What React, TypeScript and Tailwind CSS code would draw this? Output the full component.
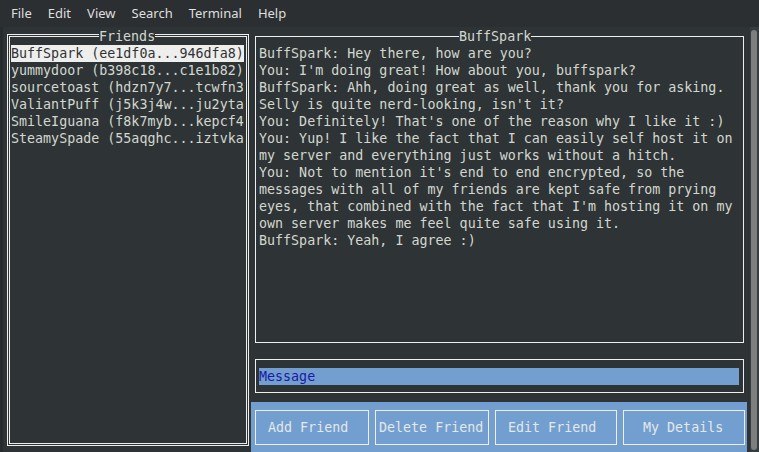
import React from 'react';

const friends = [
  'BuffSpark (ee1df0a...946dfa8)',
  'yummydoor (b398c18...c1e1b82)',
  'sourcetoast (hdzn7y7...tcwfn3',
  'ValiantPuff (j5k3j4w...ju2yta',
  'SmileIguana (f8k7myb...kepcf4',
  'SteamySpade (55aqghc...iztvka',
];

const messages = [
  'BuffSpark: Hey there, how are you?',
  "You: I'm doing great! How about you, buffspark?",
  'BuffSpark: Ahh, doing great as well, thank you for asking.',
  "Selly is quite nerd-looking, isn't it?",
  "You: Definitely! That's one of the reason why I like it :)",
  'You: Yup! I like the fact that I can easily self host it on',
  'my server and everything just works without a hitch.',
  "You: Not to mention it's end to end encrypted, so the",
  'messages with all of my friends are kept safe from prying',
  "eyes, that combined with the fact that I'm hosting it on my",
  'own server makes me feel quite safe using it.',
  'BuffSpark: Yeah, I agree :)',
];

const menu = ['File', 'Edit', 'View', 'Search', 'Terminal', 'Help'];

// buttons: label, box width, left padding inside the border
const buttons: [string, string][] = [
  ['Add Friend', 'w-[114px] pl-[12px]'],
  ['Delete Friend', 'w-[114px] pl-[3px]'],
  ['Edit Friend', 'w-[122px] pl-[12px]'],
  ['My Details', 'w-[122px] pl-[19px]'],
];

const App = () => {
  return (
    <div className="flex h-[452px] w-[759px] flex-col overflow-hidden bg-[#2e3436]">
      {/* Menu bar */}
      <div className="flex h-[27px] items-center bg-[#2c2f31] pl-[3px] font-['Noto_Sans',sans-serif] text-[13px] text-[#dfdfdf]">
        {menu.map((m) => (
          <span key={m} className="px-[8px] leading-[27px]">
            {m}
          </span>
        ))}
      </div>

      <div className="flex flex-1 font-['DejaVu_Sans_Mono',monospace] text-[13.33px] leading-[17px] text-[#d3d7cf]">
        <div className="w-[3px] bg-[#262b2d]" />

        {/* Friends */}
        <div className="w-[248px] pb-[6px] pl-[4px] pr-[2px] pt-[7px]">
          <div className="relative h-full border-[3px] border-double border-[#eeeeec]">
            <span className="absolute -top-[9px] left-[89px] bg-[#2e3436] whitespace-pre">Friends</span>
            <div className="flex flex-col items-start pl-[1px] pt-[8px]">
              {friends.map((f, i) => (
                <span
                  key={f}
                  className={`whitespace-pre ${i === 0 ? 'bg-[#eeeeec] text-[#2e3436]' : ''}`}
                >
                  {f}
                </span>
              ))}
            </div>
          </div>
        </div>

        {/* Chat side */}
        <div className="flex w-[499px] flex-col">
          <div className="relative ml-[4px] mt-[9px] h-[307px] w-[489px] border border-[#eeeeec]">
            <span className="absolute -top-[9px] left-[203px] bg-[#2e3436] whitespace-pre">BuffSpark</span>
            <div className="pl-[3px] pt-[8px]">
              {messages.map((m, i) => (
                <div key={i} className="whitespace-pre">
                  {m}
                </div>
              ))}
            </div>
          </div>

          <div className="ml-[4px] mt-[16px] h-[34px] w-[489px] border border-[#eeeeec]">
            <div className="ml-[3px] mr-[4px] mt-[8px] h-[17px] bg-[#729fcf] text-[#1a1aa6]">Message</div>
          </div>

          <div className="mt-[9px] flex w-[496px] flex-1 gap-[6px] bg-[#729fcf] pl-[4px] pt-[8px]">
            {buttons.map(([label, cls]) => (
              <div
                key={label}
                className={`flex h-[35px] items-center border border-[#eeeeec] whitespace-pre text-[#e4e7ea] ${cls}`}
              >
                {label}
              </div>
            ))}
          </div>
        </div>

        {/* Scrollbar */}
        <div className="w-[9px] bg-[#353d3f] pl-[1px] pt-[3px]">
          <div className="h-[420px] w-[6px] rounded-full bg-[#7e7e7e]" />
        </div>
      </div>
    </div>
  );
};

export default App;
